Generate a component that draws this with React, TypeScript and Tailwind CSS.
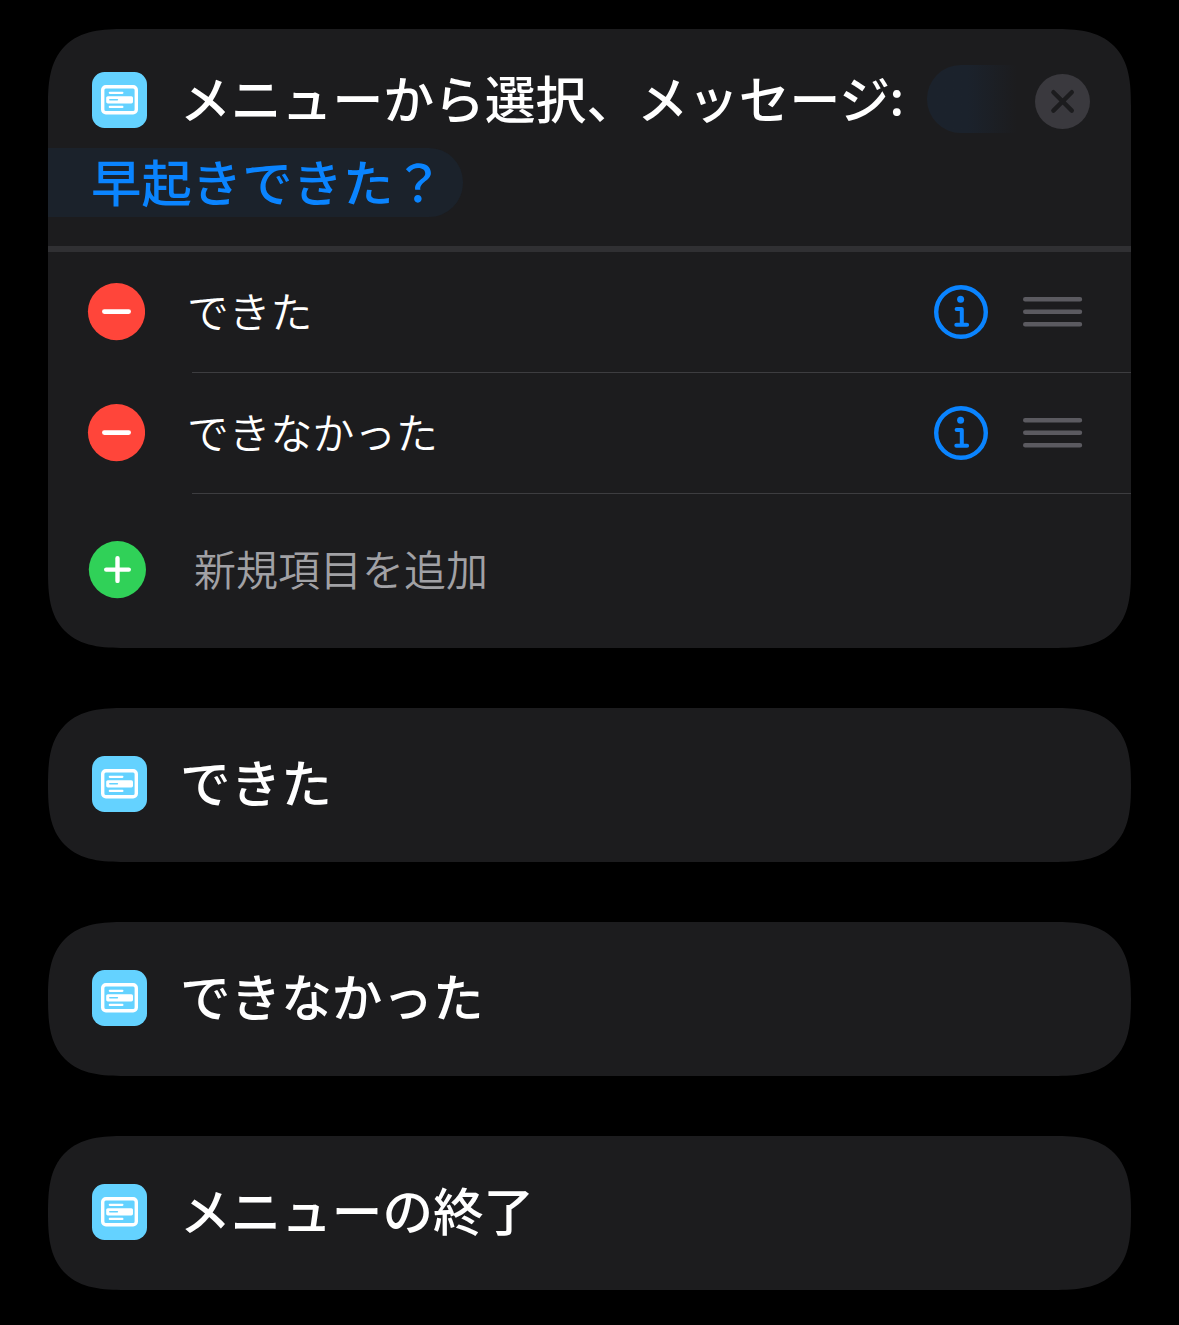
import { ReactNode } from "react";
import clsx from "clsx";

const items = ["できた", "できなかった"];

const branches = ["できた", "できなかった", "メニューの終了"];

function Card({ children, className }: { children: ReactNode; className?: string }) {
  return (
    <section
      className={clsx(
        "overflow-hidden bg-[#1c1c1e] rounded-[66px] supports-[corner-shape:squircle]:rounded-[77px] [corner-shape:superellipse(1.48)]",
        className
      )}
    >
      {children}
    </section>
  );
}

function MenuIcon() {
  return (
    <svg viewBox="0 0 55 56" className="h-14 w-[55px] shrink-0">
      <rect width="55" height="56" rx="12.5" fill="#64d2ff" />
      <rect x="10.7" y="14.7" width="33.6" height="26" rx="3.2" fill="none" stroke="#fff" strokeWidth="3.4" />
      <path d="M17.8 20.8h12.6M17.8 34.9h12.6" stroke="#fff" strokeWidth="2.2" strokeLinecap="round" />
      <rect x="14.2" y="24.2" width="26.8" height="7.2" rx="1.6" fill="#fff" />
      <path d="M17.8 27.7h7.6" stroke="#64d2ff" strokeWidth="1.5" strokeLinecap="round" />
    </svg>
  );
}

function CloseIcon() {
  return (
    <svg viewBox="0 0 56 56" className="size-14">
      <circle cx="27.5" cy="28.5" r="27.5" fill="#3a393e" />
      <path d="M18.4 19.2l18.4 18.4M36.8 19.2l-18.4 18.4" stroke="#1c1c1e" strokeWidth="4.4" strokeLinecap="round" />
    </svg>
  );
}

function RemoveIcon() {
  return (
    <svg viewBox="0 0 58 58" className="size-[58px]">
      <circle cx="29.5" cy="28.6" r="28.6" fill="#ff453a" />
      <path d="M17.3 28.6h24.4" stroke="#fff" strokeWidth="4.6" strokeLinecap="round" />
    </svg>
  );
}

function AddIcon() {
  return (
    <svg viewBox="0 0 58 58" className="size-[58px]">
      <circle cx="29.4" cy="28.6" r="28.6" fill="#30d158" />
      <path d="M18.2 28.6h22.6M29.5 17.3v22.6" stroke="#fff" strokeWidth="4.4" strokeLinecap="round" />
    </svg>
  );
}

function InfoIcon() {
  return (
    <svg viewBox="0 0 54 54" className="size-[54px]" fill="none" stroke="#0a84ff">
      <circle cx="27" cy="27" r="24.8" strokeWidth="4.4" />
      <circle cx="26.6" cy="14.3" r="3.5" fill="#0a84ff" stroke="none" />
      <path d="M22.6 24.1h5.2v15.6M22.3 39.8h10.8" strokeWidth="4" strokeLinecap="round" strokeLinejoin="round" />
    </svg>
  );
}

function DragHandle() {
  return (
    <svg viewBox="0 0 60 32" className="h-8 w-[60px]">
      <path d="M2.2 3.3h54.8M2.2 15.8h54.8M2.2 28.2h54.8" stroke="#5b5a60" strokeWidth="4.4" strokeLinecap="round" />
    </svg>
  );
}

export default function App() {
  return (
    <main
      lang="ja"
      className="flex h-[1325px] w-[1179px] flex-col gap-[60px] overflow-hidden bg-black px-12 pt-[29px] font-['Noto_Sans_CJK_JP',sans-serif] text-white"
    >
      <Card className="h-[619px] shrink-0">
        {/* Action title with its message token */}
        <header className="h-[217px] pt-9">
          <div className="flex h-[68px] items-center pl-11">
            <div className="pt-0.5">
              <MenuIcon />
            </div>
            <h1 className="ml-[33px] flex w-[747px] pb-[5px] text-[50.8px] leading-[68px] font-medium whitespace-nowrap">
              メニューから選択、メッセージ
              <span className="font-['Lato'] font-bold">:</span>
            </h1>
            <div className="h-[68px] w-[90px] rounded-l-[34px] bg-linear-to-r from-[#1b222c] from-45% to-[#1c1c1e]" />
            <button className="mt-1 ml-[18px]">
              <CloseIcon />
            </button>
          </div>
          <div className="mt-[15px] h-[69px] w-[415px] rounded-r-[34px] bg-[#1b222b] pl-[43px] text-[50.4px] leading-[65px] font-medium whitespace-nowrap text-[#0a84ff]">
            早起きできた？
          </div>
        </header>
        <div className="h-1.5 bg-[#303033]" />

        {/* Menu items */}
        <ul>
          {items.map((item) => (
            <li key={item} className="flex h-[121px] pl-[39px]">
              <div className="flex h-[119px] w-[105px] shrink-0 items-center">
                <RemoveIcon />
              </div>
              <div className="flex flex-1 items-center border-b border-[#3d3d40] pr-12">
                <span className="-ml-[5px] flex-1 pb-[5px] text-[41.8px] leading-[60px] font-[350]">{item}</span>
                <InfoIcon />
                <span className="ml-[35px]">
                  <DragHandle />
                </span>
              </div>
            </li>
          ))}
        </ul>
        <div className="flex h-[151px] items-center pl-10">
          <AddIcon />
          <span className="ml-12 pb-1 text-[42px] leading-[60px] font-[350] text-[#a1a1a5]">新規項目を追加</span>
        </div>
      </Card>

      {branches.map((branch) => (
        <Card key={branch} className="flex h-[154px] shrink-0 items-center pb-0.5 pl-11">
          <MenuIcon />
          <h2 className="ml-[33px] pb-1.5 text-[50.6px] leading-[68px] font-medium">{branch}</h2>
        </Card>
      ))}
    </main>
  );
}
